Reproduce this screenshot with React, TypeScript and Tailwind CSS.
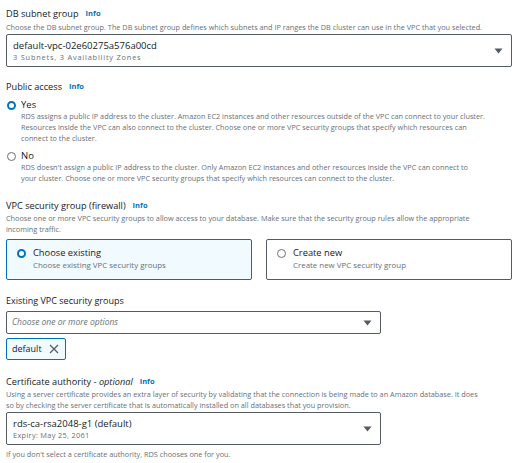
import React from 'react';

const font = { fontFamily: '"Open Sans", "Noto Sans", sans-serif' };

const Info = () => <span className="ml-[7px] text-[7.5px] font-bold text-[#0073bb]">Info</span>;

const Caret = () => (
  <svg width="9" height="6" viewBox="0 0 9 6" className="shrink-0">
    <path d="M0.5 0.5h8L4.5 5.5z" fill="#545b64" />
  </svg>
);

const Radio = ({ checked }: { checked: boolean }) =>
  checked ? (
    <span className="inline-block w-[9px] h-[9px] rounded-full border-[2.5px] border-[#0073bb] bg-white shrink-0" />
  ) : (
    <span className="inline-block w-[9px] h-[9px] rounded-full border border-[#687078] bg-white shrink-0" />
  );

export default function App() {
  return (
    <div style={font} className="w-[522px] h-[463px] bg-white px-[6px] pt-[8px] text-[#16191f] overflow-hidden">
      {/* DB subnet group */}
      <div className="flex items-center h-[12px] text-[9.2px] leading-none">
        DB subnet group <Info />
      </div>
      <div className="mt-[2px] text-[7.3px] leading-[11px] text-[#687078] whitespace-nowrap">
        Choose the DB subnet group. The DB subnet group defines which subnets and IP ranges the DB cluster can use in the VPC that you selected.
      </div>
      <div className="mt-[1px] w-[506px] h-[33px] border border-[#545b64] rounded-[2px] flex items-center justify-between pl-[6px] pr-[8px]">
        <div className="flex flex-col">
          <span className="text-[9.5px] leading-[13px]">default-vpc-02e60275a576a00cd</span>
          <span className="text-[7.4px] tracking-[0.8px] leading-[10px] text-[#687078]">3 Subnets, 3 Availability Zones</span>
        </div>
        <Caret />
      </div>

      {/* Public access */}
      <div className="mt-[14px] flex items-center h-[12px] text-[9.2px] leading-none">
        Public access <Info />
      </div>
      <div className="mt-[6px] flex items-center gap-[5px] h-[12px] pl-[1px]">
        <Radio checked />
        <span className="text-[9.5px]">Yes</span>
      </div>
      <div className="pl-[15px] text-[7.3px] leading-[11px] text-[#687078]">
        RDS assigns a public IP address to the cluster. Amazon EC2 instances and other resources outside of the VPC can connect to your cluster.
        <br />
        Resources inside the VPC can also connect to the cluster. Choose one or more VPC security groups that specify which resources can
        <br />
        connect to the cluster.
      </div>
      <div className="mt-[6px] flex items-center gap-[5px] h-[12px] pl-[1px]">
        <Radio checked={false} />
        <span className="text-[9.5px]">No</span>
      </div>
      <div className="pl-[15px] text-[7.3px] leading-[11px] text-[#687078]">
        RDS doesn't assign a public IP address to the cluster. Only Amazon EC2 instances and other resources inside the VPC can connect to
        <br />
        your cluster. Choose one or more VPC security groups that specify which resources can connect to the cluster.
      </div>

      {/* VPC security group */}
      <div className="mt-[16px] flex items-center h-[12px] text-[9.2px] leading-none">
        VPC security group (firewall) <Info />
      </div>
      <div className="mt-[1px] text-[7.3px] leading-[11px] text-[#687078]">
        Choose one or more VPC security groups to allow access to your database. Make sure that the security group rules allow the appropriate
        <br />
        incoming traffic.
      </div>
      <div className="mt-[4px] grid grid-cols-2 gap-[14px] w-[506px]">
        <div className="h-[41px] border border-[#0073bb] bg-[#f1faff] rounded-[2px] pl-[10px] pt-[7px]">
          <div className="flex items-center gap-[7px] h-[12px]">
            <Radio checked />
            <span className="text-[9.3px]">Choose existing</span>
          </div>
          <div className="pl-[16px] text-[7.9px] leading-[12px] text-[#687078]">Choose existing VPC security groups</div>
        </div>
        <div className="h-[41px] border border-[#545b64] rounded-[2px] pl-[10px] pt-[7px]">
          <div className="flex items-center gap-[7px] h-[12px]">
            <Radio checked={false} />
            <span className="text-[9.3px]">Create new</span>
          </div>
          <div className="pl-[16px] text-[7.9px] leading-[12px] text-[#687078]">Create new VPC security group</div>
        </div>
      </div>

      {/* Existing VPC security groups */}
      <div className="mt-[14px] flex items-center h-[12px] text-[9px] leading-none">Existing VPC security groups</div>
      <div className="mt-[5px] w-[375px] h-[23px] border border-[#545b64] rounded-[2px] flex items-center justify-between pl-[5px] pr-[8px]">
        <span className="text-[8.5px] italic text-[#687078]">Choose one or more options</span>
        <Caret />
      </div>
      <div className="mt-[4px] inline-flex items-center gap-[7px] h-[22px] border border-[#0073bb] bg-[#f1faff] rounded-[2px] pl-[5px] pr-[6px]">
        <span className="text-[9px]">default</span>
        <svg width="10" height="10" viewBox="0 0 10 10">
          <path d="M1 1l8 8M9 1l-8 8" stroke="#545b64" strokeWidth="1.2" />
        </svg>
      </div>

      {/* Certificate authority */}
      <div className="mt-[16px] flex items-center h-[12px] text-[9.2px] leading-none">
        Certificate authority -&nbsp;<span className="italic">optional</span> <Info />
      </div>
      <div className="mt-[1px] text-[7.3px] leading-[11px] text-[#687078]">
        Using a server certificate provides an extra layer of security by validating that the connection is being made to an Amazon database. It does
        <br />
        so by checking the server certificate that is automatically installed on all databases that you provision.
      </div>
      <div className="mt-[1px] w-[375px] h-[33px] border border-[#545b64] rounded-[2px] flex items-center justify-between pl-[6px] pr-[8px]">
        <div className="flex flex-col">
          <span className="text-[9.5px] leading-[13px]">rds-ca-rsa2048-g1 (default)</span>
          <span className="text-[7.4px] tracking-[0.3px] leading-[10px] text-[#687078]">Expiry: May 25, 2061</span>
        </div>
        <Caret />
      </div>
      <div className="mt-[4px] text-[7.3px] leading-[11px] text-[#687078]">
        If you don't select a certificate authority, RDS chooses one for you.
      </div>
    </div>
  );
}
